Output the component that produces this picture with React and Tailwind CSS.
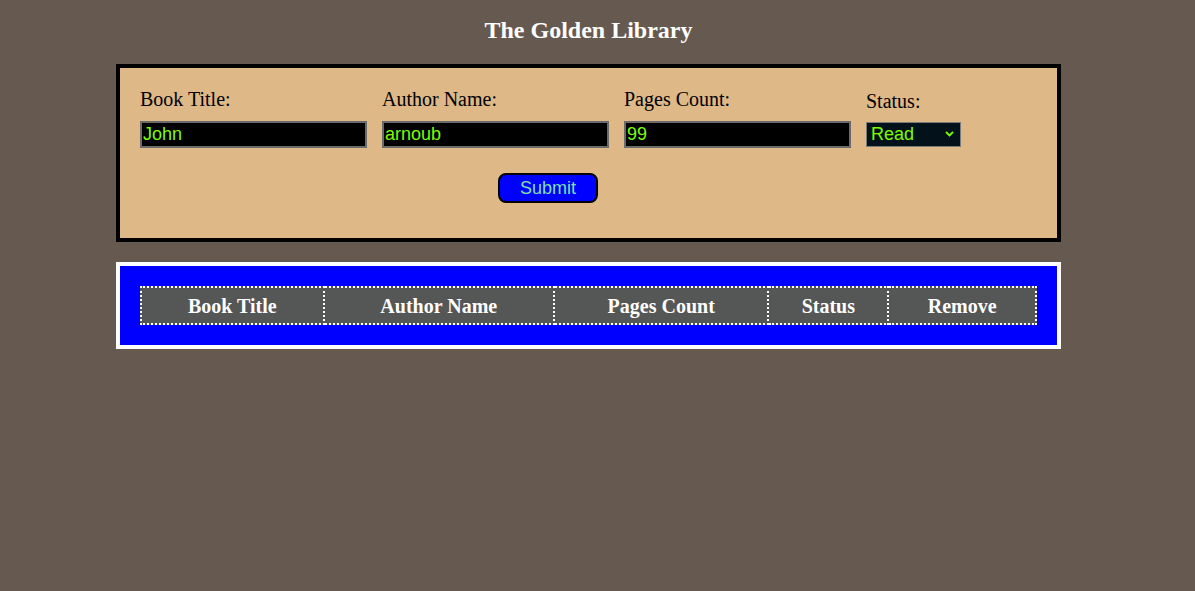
import { useState } from 'react'

const Field = ({ label, value, onChange }) => {
  return (
    <div className='w-[242px] shrink-0'>
      <label className='block text-[20px] leading-[23px] text-black'>{label}</label>
      <input
        type='text'
        className='mt-[10px] block w-[227px] h-[27px] bg-black border-2 border-[#6b6b6b] px-[1px] text-[18px] leading-[21px] text-[#7cfc00] outline-none'
        style={{ fontFamily: '"Liberation Sans", Arial, sans-serif' }}
        value={value}
        onChange={(e) => onChange(e.target.value)}
      />
    </div>
  )
}

const App = () => {
  const [title, setTitle] = useState('John')
  const [author, setAuthor] = useState('arnoub')
  const [pages, setPages] = useState('99')
  const [status, setStatus] = useState('Read')

  const onSubmit = (e) => {
    e.preventDefault()
  }

  return (
    <div className='min-h-[591px] bg-[#655950] pt-[16px]' style={{ fontFamily: '"Liberation Serif", "Times New Roman", serif' }}>
      <h1 className='w-[945px] ml-[116px] text-center text-[24px] leading-[28px] font-bold text-white'>
        The Golden Library
      </h1>

      <form
        className='mt-[20px] ml-[116px] w-[945px] h-[178px] border-4 border-black bg-[#deb887] pt-[20px] px-[20px]'
        onSubmit={onSubmit}
      >
        <div className='flex'>
          <Field label='Book Title:' value={title} onChange={setTitle} />
          <Field label='Author Name:' value={author} onChange={setAuthor} />
          <Field label='Pages Count:' value={pages} onChange={setPages} />
          <div className='w-[120px] shrink-0'>
            <label className='block text-[20px] leading-[23px] text-black pt-[2px]'>Status:</label>
            <div className='relative mt-[9px] w-[95px] h-[25px]'>
              <select
                className='appearance-none block w-[95px] h-[25px] bg-[#03121a] border border-[#7a7a7a] pl-[4px] text-[18px] leading-[21px] text-[#7cfc00] outline-none'
                style={{ fontFamily: '"Liberation Sans", Arial, sans-serif' }}
                value={status}
                onChange={(e) => setStatus(e.target.value)}
              >
                <option>Read</option>
                <option>Not Read</option>
              </select>
              <svg className='absolute right-[7px] top-[9px] pointer-events-none' width='9' height='6' viewBox='0 0 9 6'>
                <path d='M1 1 L4.5 4.5 L8 1' stroke='#7cfc00' strokeWidth='1.8' fill='none' />
              </svg>
            </div>
          </div>
        </div>

        <button
          type='submit'
          className='mt-[25px] ml-[358px] w-[100px] h-[30px] bg-[#0000ff] border-2 border-black rounded-[8px] text-[18px] leading-[20px] text-[#7fe0a8]'
          style={{ fontFamily: '"Liberation Sans", Arial, sans-serif' }}
        >
          Submit
        </button>
      </form>

      <div className='mt-[20px] ml-[116px] w-[945px] border-4 border-white bg-[#0000ff] p-[20px]'>
        <table className='border-collapse bg-[#555656] text-white text-[20px] font-bold'>
          <thead>
            <tr className='h-[37px]'>
              <th className='w-[183px] border-2 border-dotted border-white p-0 font-bold'>Book Title</th>
              <th className='w-[231px] border-2 border-dotted border-white p-0 font-bold'>Author Name</th>
              <th className='w-[215px] border-2 border-dotted border-white p-0 font-bold'>Pages Count</th>
              <th className='w-[120px] border-2 border-dotted border-white p-0 font-bold'>Status</th>
              <th className='w-[148px] border-2 border-dotted border-white p-0 font-bold'>Remove</th>
            </tr>
          </thead>
          <tbody></tbody>
        </table>
      </div>
    </div>
  )
}

export default App
